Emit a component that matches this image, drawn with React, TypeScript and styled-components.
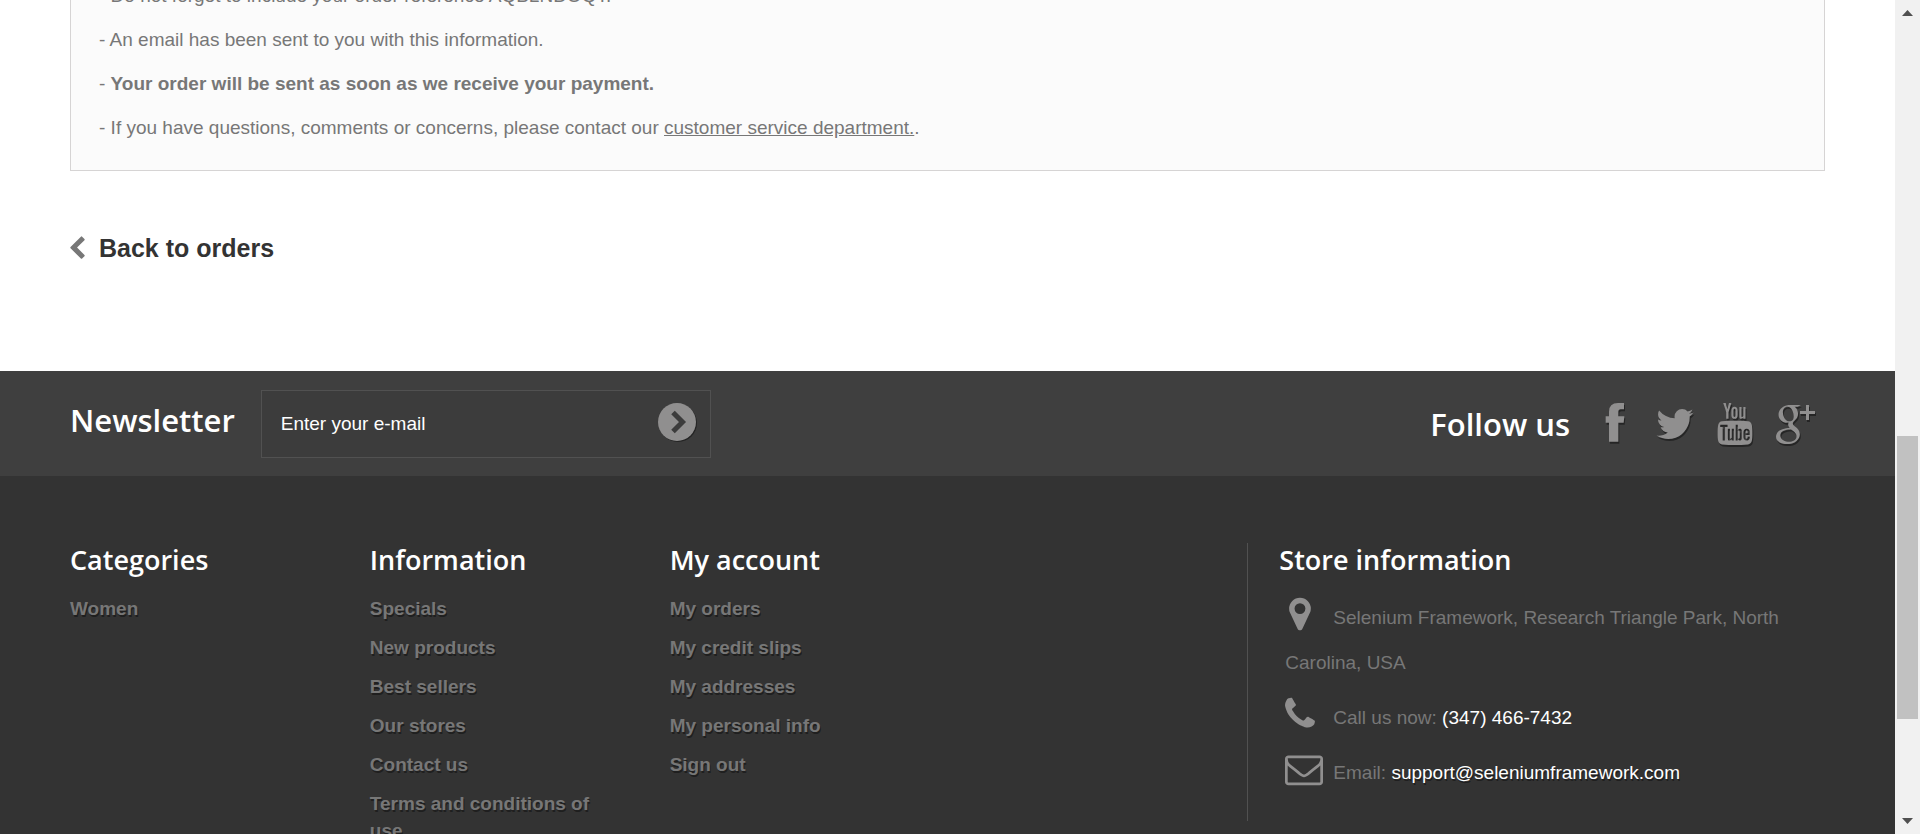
import React from 'react';
import styled, { createGlobalStyle, css } from 'styled-components';
import { TfiGoogle, TfiYoutube } from 'react-icons/tfi';

const GlobalStyle = createGlobalStyle`
  *, *::before, *::after { box-sizing: border-box; }
  body {
    margin: 0;
    background: #fff;
    color: #777;
    font-family: "Liberation Sans", Arial, Helvetica, sans-serif;
    font-size: 19px;
  }
  h4, p, ul, address { margin: 0; padding: 0; }
  ul { list-style: none; }
  a { color: inherit; text-decoration: none; }
  address { font-style: normal; }
`;

const headingFont = css`
  font-family: "Open Sans", sans-serif;
  font-weight: 600;
  color: #fff;
`;

const Frame = styled.div`
  display: flex;
  height: 100vh;
  overflow: hidden;
`;

const Page = styled.div`
  flex: 1;
  min-width: 0;
  overflow: hidden;
  background: #333;
`;

/* ---------- order confirmation ---------- */

const Main = styled.main`
  padding: 0 70px 108px;
  background: #fff;
`;

const OrderBox = styled.section`
  margin-top: -26px;
  padding: 0 28px 20px;
  background: #fbfbfb;
  border: 1px solid #d6d4d4;
  border-top: 0;
  line-height: 44px;
`;

const InlineLink = styled.a`
  text-decoration: underline;
`;

const BackLink = styled.a`
  display: inline-flex;
  align-items: center;
  gap: 14px;
  margin-top: 62px;
  color: #333;
  font-size: 25px;
  font-weight: 700;
  line-height: 30px;
  vertical-align: top;

  svg {
    width: 15px;
    height: 25px;
    fill: #777;
  }
`;

/* ---------- newsletter and social bar ---------- */

const Bar = styled.section`
  display: flex;
  justify-content: space-between;
  padding: 19px 70px 18px;
  background: #3f3f3f;
`;

const BarTitle = styled.h4<{ $line: number }>`
  ${headingFont}
  font-size: 31px;
  line-height: ${({ $line }) => $line}px;
`;

const Newsletter = styled.form`
  display: flex;
  gap: 26px;
`;

const EmailField = styled.div`
  display: flex;
  align-items: center;
  width: 450px;
  height: 68px;
  padding: 0 14px 0 19px;
  background: #3c3c3c;
  border: 1px solid #515151;
`;

const EmailInput = styled.input`
  flex: 1;
  min-width: 0;
  padding: 0;
  border: 0;
  outline: 0;
  background: transparent;
  color: #fff;
  font: inherit;

  &::placeholder {
    color: #fff;
    opacity: 1;
  }
`;

const SubmitButton = styled.button`
  display: flex;
  padding: 0 0 4px;
  border: 0;
  background: none;
  cursor: pointer;

  svg {
    width: 38px;
    height: 38px;
    filter: drop-shadow(1px 1px 0 rgba(0, 0, 0, 0.4));
  }
`;

const Social = styled.div`
  display: flex;
  align-items: center;
  gap: 15px;
`;

const SocialList = styled.ul`
  display: flex;
`;

const SocialLink = styled.a<{ $size: number }>`
  display: flex;
  justify-content: center;
  align-items: center;
  width: 60px;
  height: 60px;
  color: #908f8f;

  svg {
    width: ${({ $size }) => $size}px;
    height: ${({ $size }) => $size}px;
    fill: currentColor;
    filter: drop-shadow(1px 2px 0 rgba(0, 0, 0, 0.4));
  }
`;

/* ---------- footer columns ---------- */

const FooterGrid = styled.footer`
  display: grid;
  grid-template-columns: repeat(12, 1fr);
  align-items: start;
  padding: 67px 48px 0;
`;

const Column = styled.section`
  grid-column: span 2;
  padding: 0 22px;
`;

const StoreColumn = styled.section`
  grid-column: 9 / span 4;
  padding: 0 22px 26px 31px;
  border-left: 1px solid #515151;
`;

const ColumnTitle = styled.h4`
  ${headingFont}
  margin-bottom: 18px;
  font-size: 27px;
  line-height: 34px;
`;

const LinkList = styled.ul`
  line-height: 27px;
  font-weight: 700;
  text-shadow: 1px 2px 0 rgba(0, 0, 0, 0.4);

  li { margin-bottom: 12px; }
`;

const StoreList = styled.address`
  display: flex;
  flex-direction: column;
  gap: 10px;
  padding-left: 6px;
  line-height: 45px;
`;

const StoreIcon = styled.svg`
  width: 38px;
  height: 38px;
  margin-right: 10px;
  vertical-align: -9px;
  fill: #908f8f;
`;

const ContactLink = styled.a<{ $shadow?: boolean }>`
  color: #fff;
  text-shadow: ${({ $shadow }) => ($shadow ? '1px 2px 0 rgba(0, 0, 0, 0.4)' : 'none')};
`;

/* ---------- window scroll bar ---------- */

const ScrollTrack = styled.aside`
  display: flex;
  flex-direction: column;
  align-items: center;
  width: 25px;
  padding: 10px 0;
  background: #f1f1f1;

  svg {
    width: 11px;
    height: 6px;
    fill: #505050;
  }
`;

const ScrollSpace = styled.div<{ $share: number }>`
  flex: ${({ $share }) => $share} 1 0;
`;

const ScrollThumb = styled(ScrollSpace)`
  width: 21px;
  background: #c1c1c1;
`;

const PATHS = {
  chevronLeft:
    'M1427 301l-531 531 531 531q19 19 19 45t-19 45l-166 166q-19 19-45 19t-45-19l-742-742q-19-19-19-45t19-45l742-742q19-19 45-19t45 19l166 166q19 19 19 45t-19 45z',
  facebook: 'M103 24v19H93q-7 0-7 8v13h18l-2 19H86v57H58V83H48V64H58V50q0-26 27-26z',
  twitter:
    'M1684 408q-67 98-162 167 1 14 1 42 0 130-38 259.5t-115.5 248.5-184.5 210.5-258 146-323 54.5q-271 0-496-145 35 4 78 4 225 0 401-138-105-2-188-64.5t-114-159.5q33 5 61 5 43 0 85-11-112-23-185.5-111.5t-73.5-205.5v-4q68 38 146 41-66-44-105-115t-39-154q0-88 44-163 121 149 294.5 238.5t371.5 99.5q-8-38-8-74 0-134 94.5-228.5t228.5-94.5q140 0 236 102 109-21 205-78-37 115-142 178 93-10 186-50z',
  marker:
    'M1152 640q0-106-75-181t-181-75-181 75-75 181 75 181 181 75 181-75 75-181zm256 0q0 109-33 179l-364 774q-16 33-47.5 52t-67.5 19-67.5-19-46.5-52l-365-774q-33-70-33-179 0-212 150-362t362-150 362 150 150 362z',
  phone:
    'M1600 1240q0 27-10 70.5t-21 68.5q-21 50-122 106-94 51-186 51-27 0-53-3.5t-57.5-12.5-47-14.5-55.5-20.5-49-18q-98-35-175-83-127-79-264-216t-216-264q-48-77-83-175-3-9-18-49t-20.5-55.5-14.5-47-12.5-57.5-3.5-53q0-92 51-186 56-101 106-122 25-11 68.5-21t70.5-10q14 0 21 3 18 6 53 76 11 19 30 54t35 63.5 31 53.5q3 4 17.5 25t21.5 35.5 7 28.5q0 20-28.5 50t-62 55-62 53-28.5 46q0 9 5 22.5t8.5 20.5 14 24 11.5 19q76 137 174 235t235 174q2 1 19 11.5t24 14 20.5 8.5 22.5 5q18 0 46-28.5t53-62 55-62 50-28.5q14 0 28.5 7t35.5 21.5 25 17.5q25 15 53.5 31t63.5 35 54 30q70 35 76 53 3 7 3 21z',
  envelope:
    'M1664 1504v-768q-32 36-69 66-268 206-426 338-51 43-83 67t-86.5 48.5-102.5 24.5h-2q-48 0-102.5-24.5t-86.5-48.5-83-67q-158-132-426-338-37-30-69-66v768q0 13 9.5 22.5t22.5 9.5h1472q13 0 22.5-9.5t9.5-22.5zm0-1051v-24.5l-.5-13-3-12.5-5.5-9-9-7.5-14-2.5h-1472q-13 0-22.5 9.5t-9.5 22.5q0 168 147 284 193 152 401 317 6 5 35 29.5t46 37.5 44.5 31.5 50.5 27.5 43 9h2q20 0 43-9t50.5-27.5 44.5-31.5 46-37.5 35-29.5q208-165 401-317 54-43 100.5-115.5t46.5-131.5zm128-37v1088q0 66-47 113t-113 47h-1472q-66 0-113-47t-47-113v-1088q0-66 47-113t113-47h1472q66 0 113 47t47 113z',
};

const COLUMNS = [
  { title: 'Categories', links: ['Women'] },
  {
    title: 'Information',
    links: ['Specials', 'New products', 'Best sellers', 'Our stores', 'Contact us', 'Terms and conditions of use'],
  },
  {
    title: 'My account',
    links: ['My orders', 'My credit slips', 'My addresses', 'My personal info', 'Sign out'],
  },
];

const SOCIAL = [
  { name: 'Facebook', size: 42, icon: <svg viewBox="13 24 126 126"><path d={PATHS.facebook} /></svg> },
  { name: 'Twitter', size: 42, icon: <svg viewBox="0 0 1792 1792"><path d={PATHS.twitter} /></svg> },
  { name: 'YouTube', size: 42, icon: <TfiYoutube /> },
  { name: 'Google Plus', size: 39, icon: <TfiGoogle /> },
];

export default function App() {
  return (
    <Frame>
      <GlobalStyle />
      <Page>
        <Main>
          <OrderBox>
            <p>- Do not forget to include your order reference AQBLNDOQT.</p>
            <p>- An email has been sent to you with this information.</p>
            <p>- <strong>Your order will be sent as soon as we receive your payment.</strong></p>
            <p>
              - If you have questions, comments or concerns, please contact our{' '}
              <InlineLink href="#contact">customer service department.</InlineLink>.
            </p>
          </OrderBox>
          <BackLink href="#orders">
            <svg viewBox="410 0 1036 1792" aria-hidden="true"><path d={PATHS.chevronLeft} /></svg>
            Back to orders
          </BackLink>
        </Main>

        <Bar>
          <Newsletter onSubmit={(e) => e.preventDefault()}>
            <BarTitle $line={60}>Newsletter</BarTitle>
            <EmailField>
              <EmailInput type="email" placeholder="Enter your e-mail" aria-label="Enter your e-mail" />
              <SubmitButton type="submit" aria-label="Subscribe">
                <svg viewBox="0 0 38 38">
                  <circle cx="19" cy="19" r="19" fill="#908f8f" />
                  <path d="M15 9.500l9.500 9.500-9.500 9.500" fill="none" stroke="#3c3c3c" strokeWidth="5" />
                </svg>
              </SubmitButton>
            </EmailField>
          </Newsletter>
          <Social>
            <BarTitle $line={42}>Follow us</BarTitle>
            <SocialList>
              {SOCIAL.map(({ name, size, icon }) => (
                <li key={name}>
                  <SocialLink href="#social" aria-label={name} $size={size}>{icon}</SocialLink>
                </li>
              ))}
            </SocialList>
          </Social>
        </Bar>

        <FooterGrid>
          {COLUMNS.map(({ title, links }) => (
            <Column key={title}>
              <ColumnTitle>{title}</ColumnTitle>
              <LinkList>
                {links.map((label) => (
                  <li key={label}><a href="#page">{label}</a></li>
                ))}
              </LinkList>
            </Column>
          ))}
          <StoreColumn>
            <ColumnTitle>Store information</ColumnTitle>
            <StoreList>
              <p>
                <StoreIcon viewBox="190 0 1792 1792" aria-hidden="true"><path d={PATHS.marker} /></StoreIcon>
                Selenium Framework, Research Triangle Park, North Carolina, USA
              </p>
              <p>
                <StoreIcon viewBox="190 0 1792 1792" aria-hidden="true"><path d={PATHS.phone} /></StoreIcon>
                Call us now: <ContactLink href="tel:3474667432">(347) 466-7432</ContactLink>
              </p>
              <p>
                <StoreIcon viewBox="0 0 1792 1792" aria-hidden="true"><path d={PATHS.envelope} /></StoreIcon>
                Email:{' '}
                <ContactLink href="mailto:support@seleniumframework.com" $shadow>
                  support@seleniumframework.com
                </ContactLink>
              </p>
            </StoreList>
          </StoreColumn>
        </FooterGrid>
      </Page>

      <ScrollTrack aria-hidden="true">
        <svg viewBox="0 0 11 6"><path d="M0 6L5.500 0 11 6z" /></svg>
        <ScrollSpace $share={420} />
        <ScrollThumb $share={283} />
        <ScrollSpace $share={99} />
        <svg viewBox="0 0 11 6"><path d="M0 0h11L5.500 6z" /></svg>
      </ScrollTrack>
    </Frame>
  );
}
